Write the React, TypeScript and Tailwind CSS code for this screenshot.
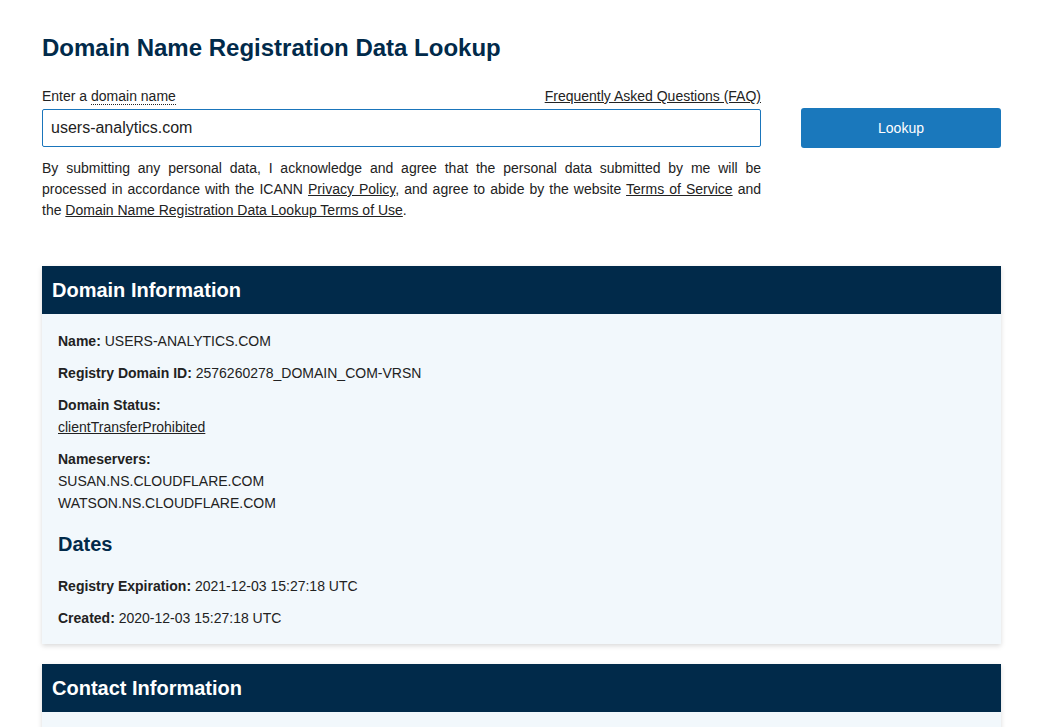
import React, { useState } from 'react';

// --- 单行字段 ---
const Field: React.FC<{ label: string; value: string }> = ({ label, value }) => (
  <div className="mb-[10px] leading-[22px]">
    <span className="font-bold">{label}:</span> {value}
  </div>
);

// --- 卡片 ---
const Card: React.FC<{ title: string; children?: React.ReactNode }> = ({ title, children }) => (
  <div className="shadow-[0_2px_5px_rgba(0,0,0,0.15)] mb-[20px]">
    <div className="bg-[#012a4a] h-[48px] flex items-center px-[10px]">
      <h2 className="text-[20px] font-bold text-white">{title}</h2>
    </div>
    <div className="bg-[#f2f8fc] px-[16px] pt-[16px] pb-[5px] min-h-[20px]">{children}</div>
  </div>
);

const App: React.FC = () => {
  const [domain, setDomain] = useState('users-analytics.com');

  return (
    <div className="font-['Liberation_Sans',Arial,sans-serif] text-[#222] text-[14px] bg-white min-h-screen">
      <div className="w-[959px] ml-[42px] pt-[34px]">
        <h1 className="text-[24px] font-bold text-[#012a4a] leading-[28px] mb-[26px]">
          Domain Name Registration Data Lookup
        </h1>

        {/* 搜索区域 */}
        <div className="flex gap-[40px]">
          <div className="w-[719px]">
            <div className="flex justify-between leading-[16px] mb-[5px]">
              <label>
                Enter a <span className="border-b border-dotted border-[#222]">domain name</span>
              </label>
              <a className="underline text-[#222]">Frequently Asked Questions (FAQ)</a>
            </div>
            <input
              value={domain}
              onChange={e => setDomain(e.target.value)}
              className="w-full h-[38px] border border-[#1a75bb] rounded-[2px] px-[8px] text-[16px] text-[#222] outline-none"
            />
            <p className="text-justify leading-[21px] mt-[11px]">
              By submitting any personal data, I acknowledge and agree that the personal data submitted by me will be
              processed in accordance with the ICANN <a className="underline">Privacy Policy</a>, and agree to abide by
              the website <a className="underline">Terms of Service</a> and the{' '}
              <a className="underline">Domain Name Registration Data Lookup Terms of Use</a>.
            </p>
          </div>
          <div className="pt-[20px]">
            <button className="w-[200px] h-[40px] bg-[#1a78bc] rounded-[3px] text-white text-[14px]">Lookup</button>
          </div>
        </div>

        <div className="mt-[45px]">
          <Card title="Domain Information">
            <Field label="Name" value="USERS-ANALYTICS.COM" />
            <Field label="Registry Domain ID" value="2576260278_DOMAIN_COM-VRSN" />
            <div className="mb-[10px] leading-[22px]">
              <div className="font-bold">Domain Status:</div>
              <a className="underline">clientTransferProhibited</a>
            </div>
            <div className="mb-[10px] leading-[22px]">
              <div className="font-bold">Nameservers:</div>
              <div>SUSAN.NS.CLOUDFLARE.COM</div>
              <div>WATSON.NS.CLOUDFLARE.COM</div>
            </div>
            <h3 className="text-[20px] font-bold text-[#012a4a] leading-[24px] mt-[18px] mb-[19px]">Dates</h3>
            <Field label="Registry Expiration" value="2021-12-03 15:27:18 UTC" />
            <Field label="Created" value="2020-12-03 15:27:18 UTC" />
          </Card>
          <Card title="Contact Information">
            <div className="h-[40px]" />
          </Card>
        </div>
      </div>
    </div>
  );
};

export default App;
